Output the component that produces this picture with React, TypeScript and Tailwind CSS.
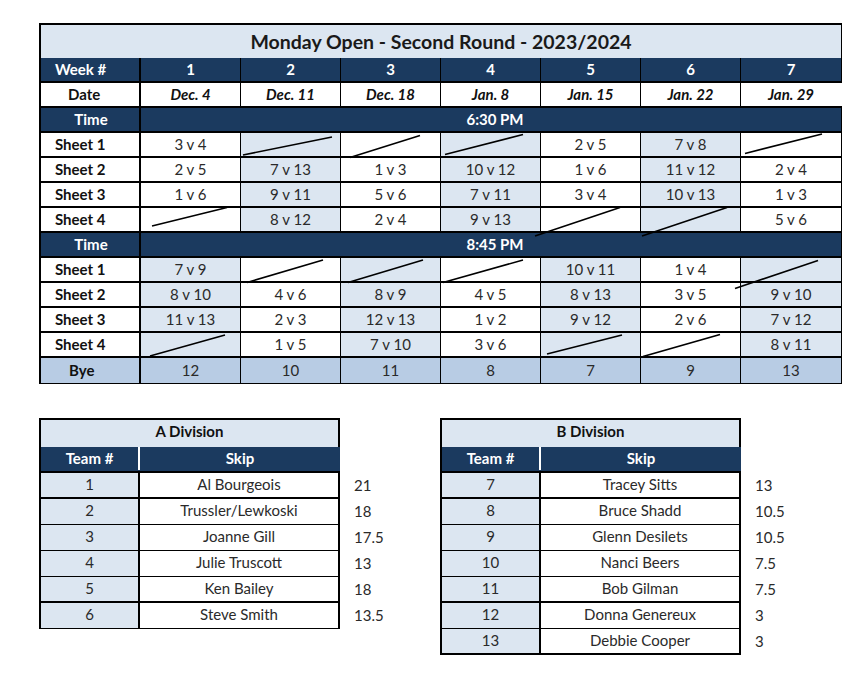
import React from "react";

const NAVY = "bg-[#1b3a5f]";
const LIGHT = "bg-[#dce6f1]";

type Row = (string | null)[];

const dates = ["Dec. 4", "Dec. 11", "Dec. 18", "Jan. 8", "Jan. 15", "Jan. 22", "Jan. 29"];
const early: Row[] = [
  ["3 v 4", null, null, null, "2 v 5", "7 v 8", null],
  ["2 v 5", "7 v 13", "1 v 3", "10 v 12", "1 v 6", "11 v 12", "2 v 4"],
  ["1 v 6", "9 v 11", "5 v 6", "7 v 11", "3 v 4", "10 v 13", "1 v 3"],
  [null, "8 v 12", "2 v 4", "9 v 13", null, null, "5 v 6"],
];
const late: Row[] = [
  ["7 v 9", null, null, null, "10 v 11", "1 v 4", null],
  ["8 v 10", "4 v 6", "8 v 9", "4 v 5", "8 v 13", "3 v 5", "9 v 10"],
  ["11 v 13", "2 v 3", "12 v 13", "1 v 2", "9 v 12", "2 v 6", "7 v 12"],
  [null, "1 v 5", "7 v 10", "3 v 6", null, null, "8 v 11"],
];
const byes = ["12", "10", "11", "8", "7", "9", "13"];

// slash lines in page coordinates
const slashes: [number, number, number, number][] = [
  [243, 155, 332, 137],
  [350, 157.5, 420, 135.5],
  [445, 154.5, 523, 134.5],
  [745, 153.5, 822, 134],
  [152, 226, 227, 207.5],
  [535, 236, 620, 207.5],
  [642, 236, 727, 207.5],
  [247, 282.5, 323, 260],
  [348, 282.5, 423, 260],
  [443, 282.5, 523, 260],
  [735, 288.5, 818, 260.5],
  [150, 356, 225, 335],
  [547, 354, 622, 335],
  [643, 356.5, 720, 334.5],
];

function SheetRows({ rows, blueEven }: { rows: Row[]; blueEven: boolean }) {
  return (
    <>
      {rows.map((r, i) => (
        <div key={i} className="flex h-[25px] border-b-2 border-r border-black">
          <div className="w-[100px] shrink-0 border-r-2 border-black bg-white pl-[14px] flex items-center font-bold text-[15px] text-[#111]">
            Sheet {i + 1}
          </div>
          {r.map((c, j) => {
            const blue = blueEven ? j % 2 === 1 : j % 2 === 0;
            return (
              <div
                key={j}
                className={`w-[100px] shrink-0 flex items-center justify-center text-[15px] text-[#2a2a2a] ${
                  j < 6 ? "border-r border-black" : ""
                } ${blue ? LIGHT : "bg-white"}`}
              >
                {c ?? ""}
              </div>
            );
          })}
        </div>
      ))}
    </>
  );
}

function TimeRow({ t }: { t: string }) {
  return (
    <div className={`flex h-[25px] border-b-2 border-r border-black ${NAVY}`}>
      <div className="w-[100px] shrink-0 border-r-2 border-black flex items-center justify-center pl-[2px] font-bold text-[15px] text-white">
        Time
      </div>
      <div className="flex-1 flex items-center justify-center font-bold text-[15px] text-white pl-[8px]">
        {t}
      </div>
    </div>
  );
}

type Team = [string, string, string];
const divA: Team[] = [
  ["1", "Al Bourgeois", "21"],
  ["2", "Trussler/Lewkoski", "18"],
  ["3", "Joanne Gill", "17.5"],
  ["4", "Julie Truscott", "13"],
  ["5", "Ken Bailey", "18"],
  ["6", "Steve Smith", "13.5"],
];
const divB: Team[] = [
  ["7", "Tracey Sitts", "13"],
  ["8", "Bruce Shadd", "10.5"],
  ["9", "Glenn Desilets", "10.5"],
  ["10", "Nanci Beers", "7.5"],
  ["11", "Bob Gilman", "7.5"],
  ["12", "Donna Genereux", "3"],
  ["13", "Debbie Cooper", "3"],
];
const thickA = [true, false, false, false, true, false];
const thickB = [true, false, false, false, true, false, true];

function Division({ title, teams, thick }: { title: string; teams: Team[]; thick: boolean[] }) {
  return (
    <div className="flex items-start w-[401px]">
      <div className="w-[301px] shrink-0 border-l-2 border-black">
        <div className={`h-[29px] pb-[4px] border-t-2 border-r-2 border-black ${LIGHT} flex items-center justify-center font-bold text-[15px] text-[#111]`}>
          {title}
        </div>
        <div className={`flex h-[26px] pb-[1px] ${NAVY} border-b-2 border-black`}>
          <div className="w-[99px] shrink-0 border-r-2 border-white flex items-center justify-center font-bold text-[15px] text-white">
            Team #
          </div>
          <div className="flex-1 flex items-center justify-center font-bold text-[15px] text-white">
            Skip
          </div>
        </div>
        {teams.map((t, i) => (
          <div
            key={i}
            className={`flex h-[26px] border-black ${thick[i] ? "border-b-2" : "border-b"}`}
          >
            <div className={`w-[99px] shrink-0 pb-[2px] border-r-2 border-black ${LIGHT} flex items-center justify-center text-[15px] text-[#2a2a2a]`}>
              {t[0]}
            </div>
            <div className="flex-1 pb-[2px] border-r-2 border-black bg-white flex items-center justify-center text-[15px] text-[#2a2a2a]">
              {t[1]}
            </div>
          </div>
        ))}
      </div>
      <div className="pt-[55px]">
        {teams.map((t, i) => (
          <div key={i} className="h-[26px] pb-[2px] pl-[14px] flex items-center text-[15px] text-[#2a2a2a]">
            {t[2]}
          </div>
        ))}
      </div>
    </div>
  );
}

export default function App() {
  return (
    <div
      className="w-[865px] h-[692px] bg-white pt-[23px] pl-[39px]"
      style={{ fontFamily: "Lato, 'Open Sans', sans-serif" }}
    >
      <div className="relative w-[803px] border-l-2 border-black">
        <div className={`h-[35px] border-t-2 border-r border-black ${LIGHT} flex items-center justify-center font-bold text-[19.5px] text-[#1a1a1a]`}>
          Monday Open - Second Round - 2023/2024
        </div>
        <div className={`flex h-[25px] ${NAVY} border-b-2 border-r border-black`}>
          <div className="w-[100px] shrink-0 border-r-2 border-black pl-[14px] flex items-center font-bold text-[15px] text-white">
            Week #
          </div>
          {[1, 2, 3, 4, 5, 6, 7].map((w) => (
            <div
              key={w}
              className={`w-[100px] shrink-0 flex items-center justify-center font-bold text-[15px] text-white ${
                w < 7 ? "border-r border-black" : ""
              }`}
            >
              {w}
            </div>
          ))}
        </div>
        <div className="flex h-[25px] bg-white border-b-2 border-black">
          <div className="w-[100px] shrink-0 border-r-2 border-black pl-[27px] flex items-center font-bold text-[15px] text-[#111]">
            Date
          </div>
          {dates.map((d, j) => (
            <div
              key={d}
              className={`w-[100px] shrink-0 flex items-center justify-center font-bold italic text-[15px] text-[#111] ${
                j < 6 ? "border-r border-black" : ""
              }`}
            >
              {d}
            </div>
          ))}
        </div>
        <TimeRow t="6:30 PM" />
        <SheetRows rows={early} blueEven={true} />
        <TimeRow t="8:45 PM" />
        <SheetRows rows={late} blueEven={false} />
        <div className="flex h-[26px] bg-[#b8cce4] border-b border-r border-black">
          <div className="w-[100px] shrink-0 border-r-2 border-black pl-[28px] flex items-center font-bold text-[15px] text-[#111]">
            Bye
          </div>
          {byes.map((b, j) => (
            <div
              key={j}
              className={`w-[100px] shrink-0 flex items-center justify-center text-[15px] text-[#2a2a2a] ${
                j < 6 ? "border-r border-black" : ""
              }`}
            >
              {b}
            </div>
          ))}
        </div>
        <svg
          className="absolute left-0 top-0 pointer-events-none overflow-visible"
          width="800"
          height="362"
        >
          {slashes.map(([x1, y1, x2, y2], i) => (
            <line
              key={i}
              x1={x1 - 41}
              y1={y1 - 23}
              x2={x2 - 41}
              y2={y2 - 23}
              stroke="#000"
              strokeWidth="1.6"
            />
          ))}
        </svg>
      </div>
      <div className="flex mt-[34px]">
        <Division title="A Division" teams={divA} thick={thickA} />
        <Division title="B Division" teams={divB} thick={thickB} />
      </div>
    </div>
  );
}
